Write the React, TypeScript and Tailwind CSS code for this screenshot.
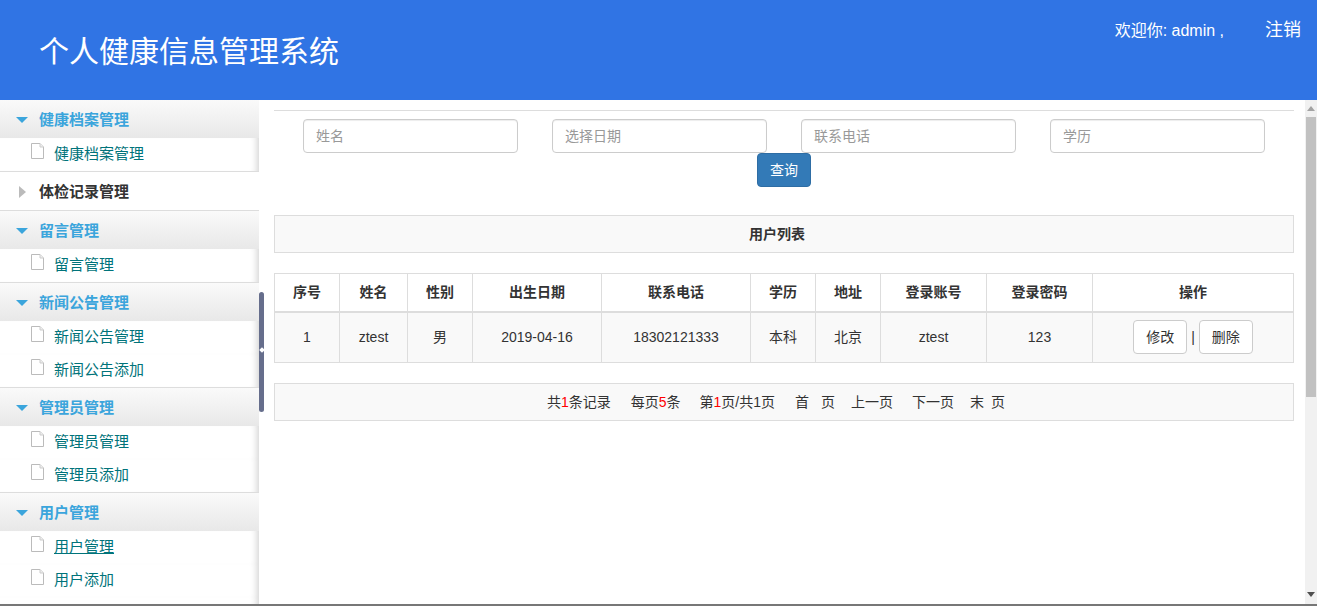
import React from 'react';

const cjk = "font-['Liberation_Sans','Noto_Sans_CJK_SC',sans-serif]";

const menu = [
  { title: '健康档案管理', open: true, items: ['健康档案管理'] },
  { title: '体检记录管理', open: false, items: [] },
  { title: '留言管理', open: true, items: ['留言管理'] },
  { title: '新闻公告管理', open: true, items: ['新闻公告管理', '新闻公告添加'] },
  { title: '管理员管理', open: true, items: ['管理员管理', '管理员添加'] },
  { title: '用户管理', open: true, items: ['用户管理', '用户添加'] },
];

const cols = [65, 68, 65, 129, 149, 65, 65, 106, 106, 201];
const heads = ['序号', '姓名', '性别', '出生日期', '联系电话', '学历', '地址', '登录账号', '登录密码', '操作'];
const row = ['1', 'ztest', '男', '2019-04-16', '18302121333', '本科', '北京', 'ztest', '123'];

const FileIcon = () => (
  <svg width="13" height="16" viewBox="0 0 13 16" className="shrink-0">
    <path d="M0.5 0.5H9L12.5 4V15.5H0.5Z" fill="#fff" stroke="#bbb" />
    <path d="M9 0.5V4H12.5" fill="#eee" stroke="#ccc" />
  </svg>
);

const Sidebar = () => (
  <aside className="w-[259px] h-full shrink-0 bg-white overflow-hidden flex flex-col">
    {menu.map((m, idx) => (
      <div key={m.title} className={idx === menu.length - 1 ? 'flex-1 flex flex-col' : 'border-b border-[#ddd]'}>
        <div
          className={`h-[38px] shrink-0 flex items-center text-[15px] font-bold ${
            m.open ? 'bg-gradient-to-b from-[#fafafa] to-[#e8e8e8] text-[#3ba5dc]' : 'bg-white text-[#333]'
          }`}
        >
          <span className="w-[39px] flex justify-center pl-[5px] mt-[2px]">
            {m.open ? (
              <svg width="12" height="6" viewBox="0 0 12 6"><path d="M0 0H12L6 6Z" fill="#3ba5dc" /></svg>
            ) : (
              <svg width="7" height="12" viewBox="0 0 7 12" className="ml-[1px]"><path d="M0 0L7 6L0 12Z" fill="#bbb" /></svg>
            )}
          </span>
          <span className="mt-[2px]">{m.title}</span>
        </div>
        {m.items.map((it) => (
          <div
            key={it}
            className="h-[33px] shrink-0 flex items-center pl-[31px] text-[15px] text-[#00737a] bg-white shadow-[inset_-8px_0_7px_-6px_rgba(0,0,0,0.18)]"
          >
            <span className="-mt-[7px]"><FileIcon /></span>
            <span className={`ml-[10px] -mt-[1px] ${it === '用户管理' ? 'underline' : ''}`}>{it}</span>
          </div>
        ))}
        {idx === menu.length - 1 && <div className="flex-1 shadow-[inset_-8px_0_7px_-6px_rgba(0,0,0,0.18)]" />}
      </div>
    ))}
  </aside>
);

const Scrollbar = () => (
  <div className="w-[12px] h-full shrink-0 bg-[#f1f1f1] flex flex-col items-center">
    <svg width="10" height="5" viewBox="0 0 10 5" className="mt-[6px]"><path d="M5 0L9 5H1Z" fill="#a3a3a3" /></svg>
    <div className="w-[10px] h-[280px] mt-[6px] bg-[#c1c1c1]" />
    <svg width="10" height="5" viewBox="0 0 10 5" className="mt-auto mb-[7px]"><path d="M1 0H9L5 5Z" fill="#505050" /></svg>
  </div>
);

const Main = () => (
  <main className="flex-1 min-w-0 h-full bg-white pl-[15px] pr-[11px] pt-[10px] text-sm text-[#333]">
    <div className="border-t border-[#ddd] pt-[8px]">
      <div className="flex justify-center gap-[34px]">
        {['姓名', '选择日期', '联系电话', '学历'].map((p) => (
          <input
            key={p}
            placeholder={p}
            className="w-[215px] h-[34px] px-3 border border-[#ccc] rounded bg-white text-sm placeholder:text-[#999] shadow-[inset_0_1px_1px_rgba(0,0,0,0.075)] outline-none"
          />
        ))}
      </div>
      <div className="flex justify-center">
        <button className="w-[54px] h-[34px] rounded bg-[#337ab7] border border-[#2e6da4] text-white text-sm">查询</button>
      </div>
    </div>

    <div className="mt-[28px] h-[38px] border border-[#ddd] bg-[#f9f9f9] flex items-center justify-center font-bold text-sm text-[#333] pr-[14px]">
      用户列表
    </div>

    <table className="mt-[20px] w-full table-fixed border-collapse">
      <colgroup>
        {cols.map((w, i) => <col key={i} style={{ width: w }} />)}
      </colgroup>
      <thead>
        <tr className="h-[38px]">
          {heads.map((h) => (
            <th key={h} className="border border-[#ddd] border-b-2 font-bold text-sm text-center p-0">{h}</th>
          ))}
        </tr>
      </thead>
      <tbody>
        <tr className="h-[51px] bg-[#f9f9f9]">
          {row.map((c, i) => (
            <td key={i} className="border border-[#ddd] text-center p-0">{c}</td>
          ))}
          <td className="border border-[#ddd] p-0">
            <div className="flex items-center justify-center gap-[4px]">
              <button className="w-[54px] h-[34px] rounded border border-[#ccc] bg-white text-sm text-[#333]">修改</button>
              <span>|</span>
              <button className="w-[54px] h-[34px] rounded border border-[#ccc] bg-white text-sm text-[#333]">删除</button>
            </div>
          </td>
        </tr>
      </tbody>
    </table>

    <div className="mt-[20px] h-[38px] border border-[#ddd] bg-[#f9f9f9] flex items-center justify-center pr-[16px] text-sm text-[#333] whitespace-pre">
      <span>共<b className="font-normal text-[#f00]">1</b>条记录</span>
      <span className="ml-[20px]">每页<b className="font-normal text-[#f00]">5</b>条</span>
      <span className="ml-[19px]">第<b className="font-normal text-[#f00]">1</b>页/共1页</span>
      <span className="ml-[20px]">首</span>
      <span className="ml-[12px]">页</span>
      <span className="ml-[16px]">上一页</span>
      <span className="ml-[19px]">下一页</span>
      <span className="ml-[16px]">末</span>
      <span className="ml-[7px]">页</span>
    </div>
  </main>
);

export default function App() {
  return (
    <div className={`w-full h-[606px] flex flex-col overflow-hidden bg-white ${cjk}`}>
      <header className="h-[100px] shrink-0 bg-[#3074e4] text-white flex justify-between pl-[39px] pr-[16px]">
        <h1 className="text-[30px] leading-[104px] font-normal">个人健康信息管理系统</h1>
        <div className="flex items-start pt-[18px]">
          <span className="text-[16px] leading-[26px]">欢迎你: admin ,</span>
          <span className="ml-[41px] text-[18px] leading-[24px]">注销</span>
        </div>
      </header>
      <div className="relative flex-1 min-h-0 flex border-b-2 border-[#777]">
        <Sidebar />
        <Main />
        <Scrollbar />
        {/* sidebar drag handle */}
        <div className="absolute left-[259px] top-[192px] w-[5px] h-[120px] rounded-sm bg-[#666e8c] flex items-center justify-center">
          <span className="w-[4px] h-[4px] -mt-[4px] rotate-45 bg-white" />
        </div>
      </div>
    </div>
  );
}
